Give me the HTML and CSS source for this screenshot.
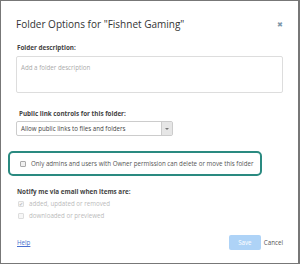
FILE: index.html
```html
<!DOCTYPE html>
<html lang="en">
<head>
  <meta charset="utf-8">
  <title>Folder Options</title>
  <link rel="stylesheet" href="styles.css">
</head>
<body>
  <div class="dialog">
    <div class="header">
      <h1 class="title">Folder Options for "Fishnet Gaming"</h1>
      <span class="close">&#x2716;</span>
    </div>

    <div class="field">
      <label class="label" for="desc">Folder description:</label>
      <textarea id="desc" class="desc" placeholder="Add a folder description"></textarea>
    </div>

    <div class="field links">
      <label class="label">Public link controls for this folder:</label>
      <div class="select">
        <span class="select-text">Allow public links to files and folders</span>
        <span class="select-arrow"></span>
      </div>
    </div>

    <div class="highlight">
      <span class="box"></span>
      <span>Only admins and users with Owner permission can delete or move this folder</span>
    </div>

    <div class="field notify">
      <div class="label">Notify me via email when items are:</div>
      <div class="option disabled">
        <span class="box checked">&#x2714;</span>
        <span>added, updated or removed</span>
      </div>
      <div class="option disabled">
        <span class="box"></span>
        <span>downloaded or previewed</span>
      </div>
    </div>

    <div class="footer">
      <a class="help" href="#">Help</a>
      <div class="actions">
        <button class="save">Save</button>
        <span class="cancel">Cancel</span>
      </div>
    </div>
  </div>
</body>
</html>
```

FILE: styles.css
```css
html, body {
  margin: 0;
  padding: 0;
}

body {
  font-family: "Open Sans", "Liberation Sans", sans-serif;
  color: #555;
  background: #fff;
}

.dialog {
  width: 300px;
  height: 264px;
  box-sizing: border-box;
  border: 1px solid #777;
  border-right-width: 2px;
  padding: 0 15px 0 15px;
}

.header {
  display: flex;
  justify-content: space-between;
  align-items: center;
  height: 30px;
  padding-top: 8px;
}

.title {
  margin: 0;
  font-size: 10px;
  font-weight: 400;
  color: #333;
}

.close {
  font-size: 7px;
  color: #7f98aa;
  margin-right: 0;
}

.label {
  display: block;
  font-size: 6.3px;
  font-weight: 700;
  color: #444;
  margin-left: 1px;
}

.field {
  margin-top: 4px;
}

.desc {
  display: block;
  box-sizing: border-box;
  width: 267px;
  height: 37px;
  margin-top: 4px;
  padding: 6px 4px;
  border: 1px solid #ddd;
  border-radius: 2px;
  font-family: inherit;
  font-size: 6.2px;
  resize: none;
}

.desc::placeholder {
  color: #aaa;
}

.links {
  margin-top: 16px;
}

.links .label {
  margin-left: 3px;
}

.select {
  display: flex;
  width: 157px;
  height: 15px;
  margin-top: 3px;
  box-sizing: border-box;
  border: 1px solid #ccc;
  border-radius: 2px;
  font-size: 6.2px;
  color: #444;
}

.select-text {
  flex: 1;
  display: flex;
  align-items: center;
  padding-left: 4px;
}

.select-arrow {
  width: 10px;
  background: #e6e6e6;
  border-left: 1px solid #ccc;
  display: flex;
  align-items: center;
  justify-content: center;
}

.select-arrow::after {
  content: "";
  border-left: 2px solid transparent;
  border-right: 2px solid transparent;
  border-top: 2px solid #777;
}

.highlight {
  display: flex;
  align-items: center;
  gap: 5px;
  width: 254px;
  height: 25px;
  box-sizing: border-box;
  margin: 15px 0 0 -8px;
  padding-left: 10px;
  border: 2px solid #2a8a80;
  border-radius: 5px;
  font-size: 6.2px;
  color: #555;
}

.box {
  display: inline-flex;
  align-items: center;
  justify-content: center;
  width: 6px;
  height: 6px;
  box-sizing: border-box;
  border: 1px solid #aaa;
  border-radius: 1px;
  background: #f0f0f0;
  font-size: 5px;
  color: #bbb;
}

.notify {
  margin-top: 11px;
}

.option {
  display: flex;
  align-items: center;
  gap: 5px;
  margin-top: 3px;
  margin-left: 2px;
  font-size: 6.2px;
}

.option.disabled {
  color: #bbb;
}

.option.disabled .box {
  border-color: #ddd;
  background: #f7f7f7;
}

.footer {
  display: flex;
  justify-content: space-between;
  align-items: center;
  margin-top: 15px;
}

.help {
  font-size: 6.2px;
  color: #4a6fd0;
  margin-left: 1px;
}

.actions {
  display: flex;
  align-items: center;
  gap: 3px;
}

.save {
  width: 32px;
  height: 15px;
  border: 0;
  border-radius: 2px;
  background: #aed3f7;
  color: #fff;
  font-family: inherit;
  font-size: 6.2px;
}

.cancel {
  font-size: 6.2px;
  color: #555;
}
```
